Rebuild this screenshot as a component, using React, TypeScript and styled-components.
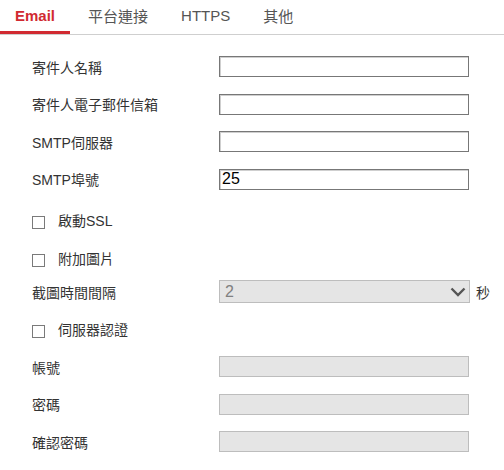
import React, { FC } from 'react'
import styled, { createGlobalStyle } from 'styled-components'

const GlobalStyle = createGlobalStyle`
	body {
		margin: 0;
		background: #fff;
		font-family: 'Liberation Sans', Arial, 'Noto Sans CJK TC', sans-serif;
	}
`

const tabs = ['Email', '平台連接', 'HTTPS', '其他']

interface FieldProps {
	label: string
	value?: string
	disabled?: boolean
}

const TextRow: FC<FieldProps> = ({ label, value, disabled }) => (
	<Row>
		<Label>{label}</Label>
		<TextInput type="text" defaultValue={value} disabled={disabled} $disabled={disabled} />
	</Row>
)

const CheckRow: FC<{ label: string; $shift?: boolean }> = ({ label, $shift }) => (
	<Row $shift={$shift}>
		<CheckLabel>
			<CheckBox />
			{label}
		</CheckLabel>
	</Row>
)

const App: FC = () => {
	return (
		<Root>
			<GlobalStyle />
			<TabBar>
				{tabs.map((tab, index) => (
					<Tab key={tab} $active={index === 0}>
						{tab}
					</Tab>
				))}
			</TabBar>
			<Form>
				<TextRow label="寄件人名稱" />
				<TextRow label="寄件人電子郵件信箱" />
				<TextRow label="SMTP伺服器" />
				<TextRow label="SMTP埠號" value="25" />
				<CheckRow label="啟動SSL" $shift />
				<CheckRow label="附加圖片" $shift />
				<Row>
					<Label>截圖時間間隔</Label>
					<Select>
						<SelectValue>2</SelectValue>
						<svg width="16" height="10" viewBox="0 0 16 10">
							<path d="M1.5 1.5 L8 8 L14.5 1.5" fill="none" stroke="#555" strokeWidth="2.4" />
						</svg>
					</Select>
					<Suffix>秒</Suffix>
				</Row>
				<CheckRow label="伺服器認證" />
				<TextRow label="帳號" disabled />
				<TextRow label="密碼" disabled />
				<TextRow label="確認密碼" disabled />
			</Form>
		</Root>
	)
}

export default App

const Root = styled.div`
	width: 504px;
	height: 470px;
	overflow: hidden;
`

const TabBar = styled.div`
	display: flex;
	gap: 3px;
	height: 34px;
	border-bottom: 1px solid #cfcfcf;
`

const Tab = styled.div<{ $active?: boolean }>`
	display: flex;
	align-items: center;
	padding: 0 15px 3px;
	font-size: 15px;
	font-weight: ${p => (p.$active ? 700 : 400)};
	color: ${p => (p.$active ? '#d12a31' : '#555')};
	box-shadow: ${p => (p.$active ? 'inset 0 -3px 0 #d12a31' : 'none')};
`

const Form = styled.div`
	display: flex;
	flex-direction: column;
	padding: 13px 0 0 32px;
`

const Row = styled.div<{ $shift?: boolean }>`
	display: flex;
	align-items: center;
	height: 37.5px;
	box-sizing: border-box;
	padding-top: ${p => (p.$shift ? '7px' : '0')};
	margin-bottom: ${p => (p.$shift ? '0' : '0')};
`

const Label = styled.span`
	width: 187px;
	font-size: 14px;
	color: #333;
`

const TextInput = styled.input<{ $disabled?: boolean }>`
	box-sizing: border-box;
	width: 250px;
	height: 21px;
	padding: 0 2px;
	margin: 0;
	font-family: 'Liberation Sans', Arial, sans-serif;
	font-size: 16px;
	color: #000;
	outline: none;
	background: ${p => (p.$disabled ? '#e5e5e5' : '#fff')};
	border: 1px solid ${p => (p.$disabled ? '#bdbdbd' : '#777')};
	box-shadow: ${p => (p.$disabled ? 'none' : 'inset 1px 1px 0 #cfcfcf')};
`

const CheckLabel = styled.label`
	display: flex;
	align-items: center;
	gap: 13px;
	font-size: 14px;
	color: #333;
`

const CheckBox = styled.span`
	display: block;
	width: 13px;
	height: 13px;
	box-sizing: border-box;
	border: 1px solid #7a7a7a;
	background: #fff;
	margin-top: 5px;
`

const Select = styled.div`
	box-sizing: border-box;
	width: 251px;
	height: 23px;
	display: flex;
	align-items: center;
	justify-content: space-between;
	padding: 0 3px 0 5px;
	background: #e5e5e5;
	border: 1px solid #bdbdbd;
`

const SelectValue = styled.span`
	font-size: 16px;
	color: #808080;
`

const Suffix = styled.span`
	margin-left: 6px;
	font-size: 14px;
	color: #333;
`
